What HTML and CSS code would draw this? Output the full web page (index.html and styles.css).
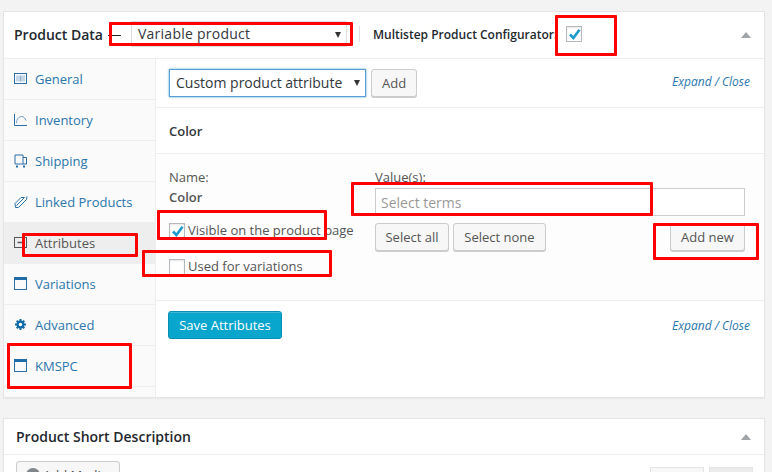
FILE: index.html
```html
<!DOCTYPE html>
<html>
  <head>
    <title>Product Data</title>
    <link rel="stylesheet" href="styles.css">
  </head>
  <body>
    <div class="panel">
      <div class="panel-head">
        <span class="panel-title">Product Data</span>
        <span class="dash"></span>
        <div class="type-select">Variable product</div>
        <span class="head-sep"></span>
        <span class="config-label">Multistep Product Configurator:</span>
        <span class="checkbox config-check">
          <svg width="16" height="16" viewBox="0 0 16 16"><path d="M4 8.500L7.400 12 13.500 3.800" fill="none" stroke="#1e9ad0" stroke-width="2.600"/></svg>
        </span>
        <span class="toggle"></span>
      </div>
      <div class="panel-body">
        <ul class="tabs">
          <li class="tab">
            <svg class="tab-icon" viewBox="0 0 14 14"><rect x="0.500" y="1.500" width="12" height="10" fill="none" stroke="#2b6fa8"/><path d="M3 3.500v6M5 3.500v6M6.500 3.500v6M8 3.500v6M10 3.500v6" stroke="#8fb4d2" stroke-width="1"/></svg>
            General
          </li>
          <li class="tab">
            <svg class="tab-icon" viewBox="0 0 14 14"><path d="M0.500 1v11.500h12.500" fill="none" stroke="#2b6fa8"/><path d="M2.500 10c0-4 2.500-6.500 5-6.500 2.500 0 3.500 2 4.500 4" fill="none" stroke="#6f9cc4"/></svg>
            Inventory
          </li>
          <li class="tab">
            <svg class="tab-icon" viewBox="0 0 14 14"><path d="M1 1h8v9H1zM9 3.500h3.500V10H9" fill="none" stroke="#2b6fa8"/><rect x="2" y="11.500" width="2" height="2" fill="#2b6fa8"/><rect x="9" y="11.500" width="2" height="2" fill="#2b6fa8"/></svg>
            Shipping
          </li>
          <li class="tab">
            <svg class="tab-icon" viewBox="0 0 14 14"><path d="M1 8.500L7 2.500h3.500M4.500 12.500h-3l-.5-4M4.500 12.500L12.500 4.500 13 1.500M2.500 10.500L10.500 2.500" fill="none" stroke="#2b6fa8"/></svg>
            Linked Products
          </li>
          <li class="tab tab-active">
            <svg class="tab-icon" viewBox="0 0 14 14"><rect x="0.500" y="1.500" width="12" height="10" fill="none" stroke="#555"/><path d="M3.500 6.500h6" stroke="#555" stroke-width="1.500"/></svg>
            Attributes
          </li>
          <li class="tab">
            <svg class="tab-icon" viewBox="0 0 14 14"><rect x="0.500" y="0.500" width="12" height="12" fill="none" stroke="#2b6fa8"/><rect x="0" y="0" width="13" height="3" fill="#1e6ca8"/></svg>
            Variations
          </li>
          <li class="tab">
            <svg class="tab-icon" viewBox="0 0 14 14"><circle cx="6.500" cy="6.500" r="2.900" fill="none" stroke="#0f6ba6" stroke-width="2.200"/><path d="M6.500 1v2M6.500 10v2M1 6.500h2M10 6.500h2M2.700 2.700L4 4M9 9l1.300 1.300M10.300 2.700L9 4M4 9l-1.300 1.300" stroke="#0f6ba6" stroke-width="2"/></svg>
            Advanced
          </li>
          <li class="tab">
            <svg class="tab-icon" viewBox="0 0 14 14"><rect x="0.500" y="0.500" width="12" height="12" fill="none" stroke="#2b6fa8"/><rect x="0" y="0" width="13" height="3" fill="#1e6ca8"/></svg>
            KMSPC
          </li>
        </ul>
        <div class="attrs">
          <div class="attrs-toolbar">
            <div class="attr-select">Custom product attribute</div>
            <button class="btn">Add</button>
            <span class="expand">Expand / Close</span>
          </div>
          <div class="attr-name">Color</div>
          <div class="attr-fields">
            <div class="attr-left">
              <div class="field-label">Name:</div>
              <div class="field-name">Color</div>
              <div class="check-row check-visible">
                <span class="checkbox">
                  <svg width="16" height="16" viewBox="0 0 16 16"><path d="M4 8.500L7.400 12 13.500 3.800" fill="none" stroke="#1e9ad0" stroke-width="2.600"/></svg>
                </span>
                <span class="check-text">Visible on the product page</span>
              </div>
              <div class="check-row check-used">
                <span class="checkbox"></span>
                <span class="check-text">Used for variations</span>
              </div>
            </div>
            <div class="attr-right">
              <div class="field-label">Value(s):</div>
              <div class="terms">Select terms</div>
              <div class="term-btns">
                <button class="btn btn-all">Select all</button>
                <button class="btn btn-none">Select none</button>
                <button class="btn btn-new">Add new</button>
              </div>
            </div>
          </div>
          <div class="attrs-foot">
            <button class="btn-save">Save Attributes</button>
            <span class="expand">Expand / Close</span>
          </div>
        </div>
      </div>
    </div>

    <div class="panel panel-short">
      <div class="short-head">
        <span class="panel-title">Product Short Description</span>
        <span class="toggle"></span>
      </div>
      <div class="short-body">
        <button class="btn btn-media">
          <svg width="16" height="16" viewBox="0 0 16 16"><circle cx="8" cy="8" r="7" fill="#82878c"/></svg>
          Add Media
        </button>
        <span class="editor-tab"></span>
        <span class="editor-tab editor-tab-grey"></span>
      </div>
    </div>

    <!-- red boxes drawn over the screenshot -->
    <div class="mark mark-type"></div>
    <div class="mark mark-check"></div>
    <div class="mark mark-terms"></div>
    <div class="mark mark-visible"></div>
    <div class="mark mark-attr"></div>
    <div class="mark mark-used"></div>
    <div class="mark mark-new"></div>
    <div class="mark mark-kmspc"></div>
  </body>
</html>
```

FILE: styles.css
```css
html, body {
  height: 472px;
  overflow: hidden;
}

body {
  font-family: "Open Sans", sans-serif;
  font-size: 13px;
  color: #444;
  background-color: #f3f3f3;
  margin: 0;
  padding: 11px 7px 0 3px;
  box-sizing: border-box;
  position: relative;
}

button {
  font-family: "Open Sans", sans-serif;
}

.panel {
  background-color: #fff;
  border: 1px solid #e5e5e5;
  box-shadow: 0 1px 1px rgba(0, 0, 0, 0.04);
}

.panel-head {
  height: 46px;
  box-sizing: content-box;
  display: flex;
  align-items: center;
  padding: 0 13px 0 10px;
  border-bottom: 1px solid #eee;
}

.panel-title {
  font-size: 14px;
  font-weight: 600;
  color: #23282d;
}

.panel-head .panel-title {
  margin-bottom: 2px;
}

.dash {
  width: 13px;
  height: 1px;
  background-color: #222;
  margin: 0 10px 0 5px;
}

.type-select {
  width: 216px;
  height: 26px;
  line-height: 24px;
  box-sizing: border-box;
  border: 1px solid #ddd;
  padding-left: 6px;
  font-size: 14px;
  letter-spacing: 0.25px;
  color: #32373c;
  position: relative;
  margin-bottom: 2px;
}

.type-select::after,
.attr-select::after {
  content: "";
  position: absolute;
  right: 5px;
  top: 10px;
  border-left: 3px solid transparent;
  border-right: 3px solid transparent;
  border-top: 6px solid #333;
}

.head-sep {
  width: 1px;
  height: 16px;
  background-color: #ddd;
  margin: 0 13px 2px 12px;
}

.config-label {
  font-size: 12px;
  font-weight: 600;
  color: #23282d;
  width: 193px;
  margin-bottom: 1px;
}

.checkbox {
  width: 16px;
  height: 16px;
  box-sizing: border-box;
  border: 1px solid #b4b9be;
  background-color: #fff;
  box-shadow: inset 0 1px 2px rgba(0, 0, 0, 0.1);
  display: block;
  flex: none;
}

.config-check {
  margin-bottom: 2px;
}

.checkbox svg {
  display: block;
  margin: -1px;
}

.toggle {
  margin-left: auto;
  border-left: 5px solid transparent;
  border-right: 5px solid transparent;
  border-bottom: 6px solid #a0a5aa;
}

.panel-body {
  display: flex;
  height: 338px;
}

.tabs {
  list-style: none;
  margin: 0;
  padding: 0 0 10px;
  width: 151px;
  flex: none;
  background-color: #fafafa;
  border-right: 1px solid #eee;
  height: 328px;
}

.tab {
  height: 40px;
  border-bottom: 1px solid #eee;
  display: flex;
  align-items: center;
  gap: 7px;
  padding-left: 10px;
  color: #2a76ad;
}

.tab-active {
  background-color: #eee;
  color: #555;
}

.tab-icon {
  width: 14px;
  height: 14px;
  flex: none;
}

.attrs {
  flex: 1;
  min-width: 0;
}

.attrs-toolbar {
  height: 48px;
  display: flex;
  align-items: center;
  padding: 0 14px 0 13px;
  gap: 5px;
  border-bottom: 1px solid #eee;
}

.attrs-toolbar .expand {
  margin-bottom: 4px;
}

.attr-select {
  width: 197px;
  height: 28px;
  line-height: 26px;
  box-sizing: border-box;
  border: 1px solid #5b9dd9;
  box-shadow: 0 0 2px rgba(30, 140, 190, 0.8);
  padding-left: 6px;
  font-size: 14px;
  color: #32373c;
  position: relative;
}

.btn {
  height: 28px;
  padding: 0 10px;
  font-size: 13px;
  color: #555;
  background-color: #f7f7f7;
  border: 1px solid #ccc;
  border-radius: 3px;
  box-shadow: 0 1px 0 #ccc;
}

.btn-all {
  width: 74px;
  padding: 0;
}

.btn-none {
  width: 93px;
  padding: 0;
}

.btn-new {
  width: 75px;
  padding: 0;
  margin-left: auto;
}

.expand {
  margin-left: auto;
  font-size: 12px;
  font-style: italic;
  color: #2a76ad;
}

.attr-name {
  height: 45px;
  line-height: 46px;
  padding-left: 13px;
  font-weight: 600;
  color: #32373c;
  border-bottom: 1px solid #eee;
}

.attr-fields {
  height: 146px;
  display: flex;
  background-color: #fdfdfd;
  border-bottom: 1px solid #eee;
  padding-left: 13px;
  padding-right: 19px;
}

.attr-left {
  width: 206px;
  flex: none;
  padding-top: 14px;
}

.field-label {
  line-height: 18px;
  color: #555;
}

.field-name {
  font-weight: 600;
  line-height: 18px;
  margin-top: 2px;
  color: #555;
}

.check-row {
  display: flex;
  align-items: center;
  gap: 3px;
  color: #555;
  white-space: nowrap;
}

.check-text {
  margin-bottom: 2px;
}

.check-visible {
  margin-top: 15px;
}

.check-used {
  margin-top: 16px;
}

.attr-right {
  flex: 1;
  padding-top: 14px;
}

.terms {
  height: 28px;
  line-height: 27px;
  box-sizing: border-box;
  border: 1px solid #ccc;
  padding-left: 5px;
  margin-top: 2px;
  font-size: 14px;
  color: #999;
  background-color: #fff;
}

.term-btns {
  display: flex;
  gap: 4px;
  margin-top: 7px;
}

.attrs-foot {
  height: 48px;
  padding-bottom: 2px;
  display: flex;
  align-items: center;
  padding-left: 12px;
  padding-right: 14px;
}

.btn-save {
  height: 28px;
  width: 114px;
  padding: 0;
  font-size: 13px;
  color: #fff;
  background-color: #08a5cc;
  border: 1px solid #0690b5;
  border-radius: 3px;
  box-shadow: inset 0 1px 0 rgba(120, 200, 230, 0.5);
}

.panel-short {
  margin-top: 20px;
  height: 200px;
}

.short-head {
  height: 35px;
  display: flex;
  align-items: center;
  padding: 0 13px 0 12px;
  border-bottom: 1px solid #eee;
}

.short-body {
  display: flex;
  align-items: flex-start;
  padding: 6px 11px 0 12px;
}

.btn-media {
  width: 104px;
  display: flex;
  align-items: center;
  gap: 2px;
  padding: 0 8px;
  white-space: nowrap;
}

.editor-tab {
  height: 26px;
  width: 54px;
  margin-top: 6px;
  margin-left: auto;
  box-sizing: border-box;
  border: 1px solid #e5e5e5;
  background-color: #f7f7f7;
}

.editor-tab-grey {
  width: 44px;
  margin-left: 5px;
  background-color: #ebebeb;
}

.mark {
  position: absolute;
  box-sizing: border-box;
  border: 3px solid #f00;
  border-radius: 1px;
}

.mark-type {
  left: 109px;
  top: 22px;
  width: 244px;
  height: 24px;
}

.mark-check {
  left: 555px;
  top: 15px;
  width: 62px;
  height: 41px;
}

.mark-terms {
  left: 351px;
  top: 182px;
  width: 302px;
  height: 34px;
}

.mark-visible {
  left: 157px;
  top: 210px;
  width: 170px;
  height: 30px;
}

.mark-attr {
  left: 22px;
  top: 233px;
  width: 116px;
  height: 24px;
}

.mark-used {
  left: 142px;
  top: 250px;
  width: 190px;
  height: 27px;
}

.mark-new {
  left: 653px;
  top: 223px;
  width: 106px;
  height: 37px;
}

.mark-kmspc {
  left: 7px;
  top: 343px;
  width: 125px;
  height: 46px;
}
```
